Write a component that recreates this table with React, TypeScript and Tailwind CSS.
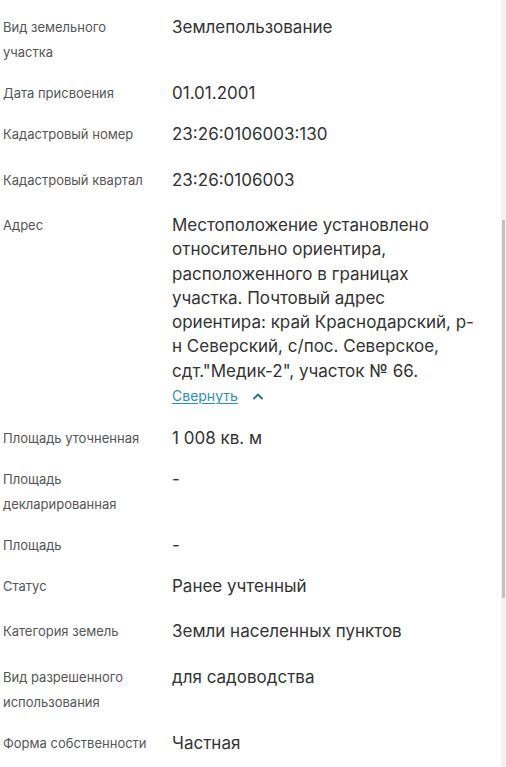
import React from "react";

type Row = { label: string[]; value: React.ReactNode; mt: string };

const font = { fontFamily: "Inter, 'Noto Sans', sans-serif" };

function Address() {
  const lines = [
    "Местоположение установлено",
    "относительно ориентира,",
    "расположенного в границах",
    "участка. Почтовый адрес",
    "ориентира: край Краснодарский, р-",
    "н Северский, с/пос. Северское,",
    'сдт."Медик-2", участок № 66.',
  ];
  return (
    <div>
      {lines.map((l, i) => (
        <div key={i} className="whitespace-nowrap">
          {l}
        </div>
      ))}
      <div className="flex items-center gap-[15px] mt-[1px]">
        <span className="text-[14px] leading-[24px] text-[#2f8fb8] underline underline-offset-[2px] decoration-[1px]">
          Свернуть
        </span>
        <svg width="10" height="7" viewBox="0 0 10 7" fill="none">
          <path d="M1 5.5 L5 1.5 L9 5.5" stroke="#2b6f8a" strokeWidth="1.8" strokeLinecap="round" strokeLinejoin="round" />
        </svg>
      </div>
    </div>
  );
}

const rows: Row[] = [
  { label: ["Вид земельного", "участка"], value: "Землепользование", mt: "mt-[0px]" },
  { label: ["Дата присвоения"], value: "01.01.2001", mt: "mt-[16px]" },
  { label: ["Кадастровый номер"], value: "23:26:0106003:130", mt: "mt-[16px]" },
  { label: ["Кадастровый квартал"], value: "23:26:0106003", mt: "mt-[21px]" },
  { label: ["Адрес"], value: <Address />, mt: "mt-[20px]" },
  { label: ["Площадь уточненная"], value: "1 008 кв. м", mt: "mt-[18px]" },
  { label: ["Площадь", "декларированная"], value: "-", mt: "mt-[16px]" },
  { label: ["Площадь"], value: "-", mt: "mt-[16px]" },
  { label: ["Статус"], value: "Ранее учтенный", mt: "mt-[16px]" },
  { label: ["Категория земель"], value: "Земли населенных пунктов", mt: "mt-[20px]" },
  { label: ["Вид разрешенного", "использования"], value: "для садоводства", mt: "mt-[21px]" },
  { label: ["Форма собственности"], value: "Частная", mt: "mt-[16px]" },
];

export default function App() {
  return (
    <div className="w-[506px] h-[767px] bg-white flex overflow-hidden" style={font}>
      <div className="flex-1 pt-[15px] pl-[3px]">
        {rows.map((r, i) => (
          <div key={i} className={`flex ${r.mt}`}>
            <div className="w-[169px] shrink-0 text-[13px] leading-[25px] text-[#555555]">
              {r.label.map((l, j) => (
                <div key={j}>{l}</div>
              ))}
            </div>
            <div className="flex-1 text-[17px] leading-[24.3px] text-[#333333]">{r.value}</div>
          </div>
        ))}
      </div>
      <div className="w-[5px] h-full bg-[#f3f3f3] relative">
        <div className="absolute left-[1px] top-[220px] w-[3px] h-[378px] bg-[#c2c2c2]" />
      </div>
    </div>
  );
}
